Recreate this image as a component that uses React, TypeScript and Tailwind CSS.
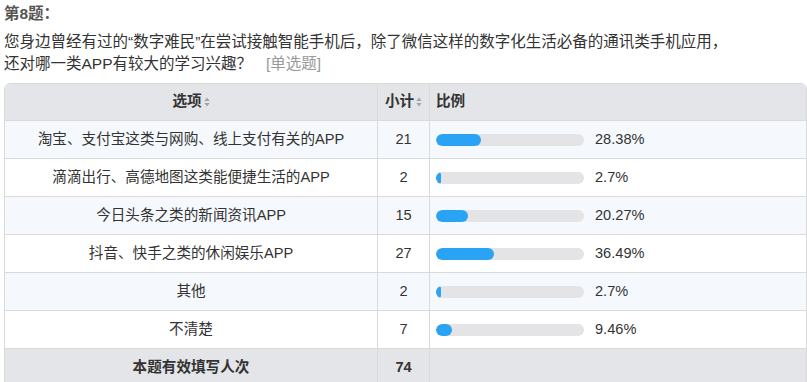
import React from 'react';

interface OptionRow {
  label: string;
  count: number;
  percent: string;
}

const rows: OptionRow[] = [
  { label: '淘宝、支付宝这类与网购、线上支付有关的APP', count: 21, percent: '28.38%' },
  { label: '滴滴出行、高德地图这类能便捷生活的APP', count: 2, percent: '2.7%' },
  { label: '今日头条之类的新闻资讯APP', count: 15, percent: '20.27%' },
  { label: '抖音、快手之类的休闲娱乐APP', count: 27, percent: '36.49%' },
  { label: '其他', count: 2, percent: '2.7%' },
  { label: '不清楚', count: 7, percent: '9.46%' },
];

// up/down triangles next to the sortable headers
function SortIcon() {
  return (
    <svg width="6" height="10" viewBox="0 0 6 10" className="ml-[2px] inline-block">
      <path d="M3 0.5 L5.6 4 L0.4 4 Z" fill="#a3a3a3" />
      <path d="M3 9.5 L5.6 6 L0.4 6 Z" fill="#a3a3a3" />
    </svg>
  );
}

function Bar({ percent }: { percent: string }) {
  return (
    <div className="flex items-center pl-[6px]">
      <div className="h-[12px] w-[148px] rounded-full bg-[#e4e4e6] overflow-hidden">
        <div className="h-full rounded-full bg-[#2ba3f5]" style={{ width: `calc(${percent} * 1.05 + 1px)` }} />
      </div>
      <span className="ml-[11px] text-[14.6px] text-[#333]">{percent}</span>
    </div>
  );
}

export default function App() {
  return (
    <div
      className="w-[807px] h-[382px] overflow-hidden bg-white pl-[4px] pt-[3px] text-[#333]"
      style={{ fontFamily: '"Liberation Sans", "Noto Sans CJK SC", sans-serif' }}
    >
      <div className="text-[15.5px] leading-[22px] font-bold text-[#555] mb-[6px]">第8题：</div>
      <div className="text-[15.5px] leading-[22px] text-[#333]">
        您身边曾经有过的“数字难民”在尝试接触智能手机后，除了微信这样的数字化生活必备的通讯类手机应用，
        <br />
        还对哪一类APP有较大的学习兴趣？
        <span className="ml-[14px] text-[#999]">[单选题]</span>
      </div>

      <div className="mt-[8px] w-[803px] rounded-t-[6px] border border-[#dadada] overflow-hidden">
        <div className="grid grid-cols-[373px_52px_1fr] h-[37px] bg-[#e4e5e9] border-b border-[#dadada] text-[14.6px] font-bold text-[#333]">
          <div className="flex items-center justify-center border-r border-[#dadada]">
            选项<SortIcon />
          </div>
          <div className="flex items-center justify-center border-r border-[#dadada]">
            小计<SortIcon />
          </div>
          <div className="flex items-center pl-[6px]">比例</div>
        </div>

        {rows.map((row, i) => (
          <div
            key={row.label}
            className={`grid grid-cols-[373px_52px_1fr] h-[38px] border-b border-[#dadada] text-[14.6px] ${
              i % 2 === 0 ? 'bg-[#f5f9fd]' : 'bg-white'
            }`}
          >
            <div className="flex items-center justify-center border-r border-[#dadada]">{row.label}</div>
            <div className="flex items-center justify-center border-r border-[#dadada]">{row.count}</div>
            <Bar percent={row.percent} />
          </div>
        ))}

        <div className="grid grid-cols-[373px_52px_1fr] h-[37px] bg-[#e4e5e9] text-[14.6px] font-bold">
          <div className="flex items-center justify-center border-r border-[#dadada]">本题有效填写人次</div>
          <div className="flex items-center justify-center border-r border-[#dadada]">74</div>
          <div />
        </div>
      </div>
    </div>
  );
}
